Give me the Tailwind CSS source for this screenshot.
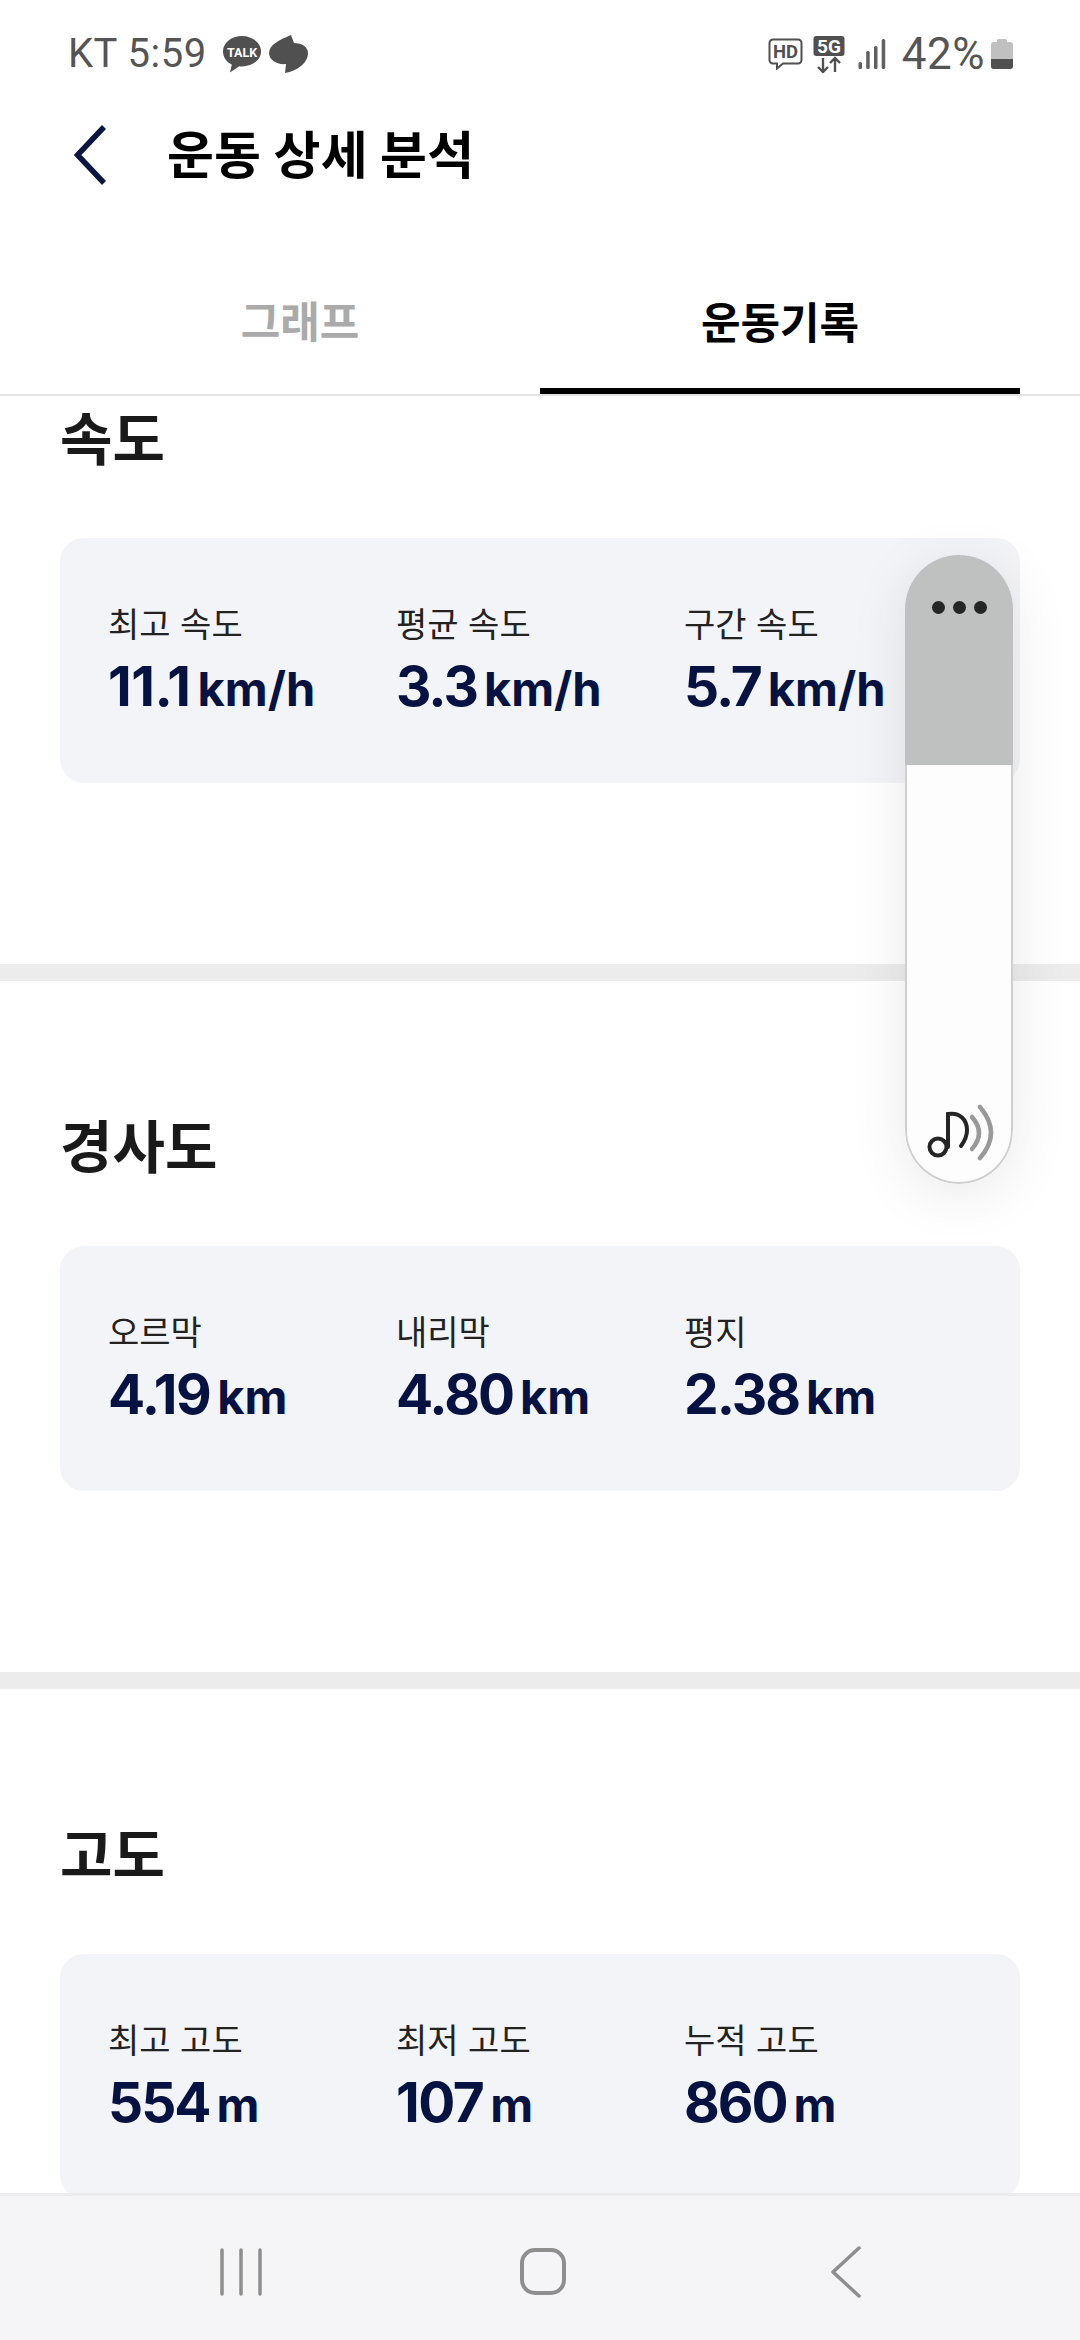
<!DOCTYPE html>
<html lang="ko">
<head>
<meta charset="utf-8">
<script src="https://cdn.jsdelivr.net/npm/@tailwindcss/browser@4"></script>
</head>
<body class="bg-white">
<div class="relative w-[1080px] h-[2340px] overflow-hidden flex flex-col bg-white font-['Inter','Noto_Sans_CJK_KR',sans-serif]">

    <!-- status bar -->
    <div class="h-[108px] shrink-0 flex items-center justify-between pl-[68px] pr-[67px] text-[#555] text-[40px] font-['Roboto','Noto_Sans_CJK_KR',sans-serif]">
        <div class="flex items-center">
            <span class="tracking-[0.5px]">KT 5:59</span>
            <svg class="ml-[16px]" width="38" height="37" viewBox="0 0 38 37">
                <path d="M19 0C8.500 0 0 6.800 0 15.500c0 5.600 3.500 10.400 8.800 13.100L7 36.500l9.200-6.300c.9.100 1.900.2 2.800.2 10.500 0 19-6.800 19-15S29.500 0 19 0z" fill="#505050"/>
                <text x="19" y="20.500" text-anchor="middle" font-size="12.500" font-weight="700" fill="#fff" font-family="Roboto">TALK</text>
            </svg>
            <svg class="ml-[8px]" width="39" height="38" viewBox="0 0 39 38">
                <path d="M22 0L25 8C33 8 39 12 39 18C39 28 28 36 16 38L17 29C8 30 0 25 0 18C0 10 10 5 22 0Z" fill="#505050"/>
            </svg>
        </div>
        <div class="flex items-center">
            <svg width="35" height="32" viewBox="0 0 35 32">
                <path d="M5 1.500h25a3.500 3.500 0 0 1 3.500 3.500v17a3.500 3.500 0 0 1-3.500 3.500H15l-6 5v-5H5A3.500 3.500 0 0 1 1.500 22V5A3.500 3.500 0 0 1 5 1.500z" fill="none" stroke="#505050" stroke-width="2"/>
                <text x="17.500" y="20" text-anchor="middle" font-size="18.500" font-weight="700" fill="#505050" font-family="Roboto">HD</text>
            </svg>
            <svg class="ml-[10px]" width="32" height="37" viewBox="0 0 32 37">
                <rect x="0.500" y="0" width="31" height="20" rx="3" fill="#505050"/>
                <text x="16" y="16.500" text-anchor="middle" font-size="19" font-weight="700" fill="#fff" font-family="Roboto">5G</text>
                <path d="M10 22v14M5 31l5 5 5-5M22 36V22M17 27l5-5 5 5" fill="none" stroke="#505050" stroke-width="2.400"/>
            </svg>
            <svg class="ml-[13px]" width="28" height="30" viewBox="0 0 28 30">
                <rect x="0.500" y="23" width="3.500" height="7" rx="1.500" fill="#606060"/>
                <rect x="8.200" y="12" width="3.500" height="18" rx="1.500" fill="#606060"/>
                <rect x="16" y="7" width="3.500" height="23" rx="1.500" fill="#606060"/>
                <rect x="23.700" y="0" width="3.500" height="30" rx="1.500" fill="#606060"/>
            </svg>
            <span class="ml-[16px] tracking-[0.5px] text-[44px]">42%</span>
            <svg class="ml-[6px]" width="22" height="32" viewBox="0 0 22 32">
                <path d="M6 4V2.500A1.500 1.500 0 0 1 7.500 1h7A1.500 1.500 0 0 1 16 2.500V4h3a3 3 0 0 1 3 3v21a3 3 0 0 1-3 3H3a3 3 0 0 1-3-3V7a3 3 0 0 1 3-3z" fill="#c0c0c0"/>
                <path d="M0 21h22v7a3 3 0 0 1-3 3H3a3 3 0 0 1-3-3z" fill="#505050"/>
            </svg>
        </div>
    </div>

    <!-- header -->
    <div class="h-[94px] shrink-0 flex items-center pl-[74px]">
        <svg width="32" height="60" viewBox="0 0 32 60">
            <path d="M30 2L3.500 30l26.500 28" fill="none" stroke="#0b1642" stroke-width="5.500"/>
        </svg>
        <h1 class="ml-[61px] text-[51px] font-bold text-black leading-none tracking-[0.2px]">운동 상세 분석</h1>
    </div>

    <!-- tabs -->
    <div class="h-[194px] shrink-0 flex items-stretch pl-[60px] pr-[60px] pt-[70px] border-b-2 border-[#e4e4e4] text-[43px] font-bold">
        <div class="w-[480px] flex items-center justify-center pb-[22px] text-[#aaaaaa]">그래프</div>
        <div class="w-[480px] flex items-center justify-center pb-[13px] text-black border-b-[6px] border-black">운동기록</div>
    </div>

    <!-- scroll content -->
    <div class="flex-1 overflow-hidden flex flex-col">
        <div class="pl-[60px] h-[568px] shrink-0">
            <h2 class="text-[57px] font-bold text-[#1a1a1a] leading-none pt-[15px]">속도</h2>
            <div class="mt-[70px] w-[960px] h-[245px] rounded-[24px] bg-[#f3f4f8] grid grid-cols-[288px_288px_1fr] pl-[48px] pt-[70px]">
                <div>
                    <p class="text-[34px] text-[#222] leading-none">최고 속도</p>
                    <p class="mt-[17px] text-[55px] font-bold text-[#061241] leading-none tracking-[-0.500px]">11.1<span class="ml-[7px] text-[47px] tracking-normal">km/h</span></p>
                </div>
                <div>
                    <p class="text-[34px] text-[#222] leading-none">평균 속도</p>
                    <p class="mt-[17px] text-[55px] font-bold text-[#061241] leading-none tracking-[-2px]">3.3<span class="ml-[7px] text-[47px] tracking-normal">km/h</span></p>
                </div>
                <div>
                    <p class="text-[34px] text-[#222] leading-none">구간 속도</p>
                    <p class="mt-[17px] text-[55px] font-bold text-[#061241] leading-none tracking-[-2px]">5.7<span class="ml-[7px] text-[47px] tracking-normal">km/h</span></p>
                </div>
            </div>
        </div>
        <div class="h-[17px] shrink-0 bg-[#ececec]"></div>

        <div class="pl-[60px] h-[691px] shrink-0">
            <h2 class="text-[57px] font-bold text-[#1a1a1a] leading-none pt-[138px]">경사도</h2>
            <div class="mt-[70px] w-[960px] h-[245px] rounded-[24px] bg-[#f3f4f8] grid grid-cols-[288px_288px_1fr] pl-[48px] pt-[70px]">
                <div>
                    <p class="text-[34px] text-[#222] leading-none">오르막</p>
                    <p class="mt-[17px] text-[55px] font-bold text-[#061241] leading-none tracking-[-1.500px]">4.19<span class="ml-[7px] text-[47px] tracking-normal">km</span></p>
                </div>
                <div>
                    <p class="text-[34px] text-[#222] leading-none">내리막</p>
                    <p class="mt-[17px] text-[55px] font-bold text-[#061241] leading-none tracking-[-2px]">4.80<span class="ml-[7px] text-[47px] tracking-normal">km</span></p>
                </div>
                <div>
                    <p class="text-[34px] text-[#222] leading-none">평지</p>
                    <p class="mt-[17px] text-[55px] font-bold text-[#061241] leading-none tracking-[-2px]">2.38<span class="ml-[7px] text-[47px] tracking-normal">km</span></p>
                </div>
            </div>
        </div>
        <div class="h-[17px] shrink-0 bg-[#ececec]"></div>

        <div class="pl-[60px] shrink-0">
            <h2 class="text-[57px] font-bold text-[#1a1a1a] leading-none pt-[138px]">고도</h2>
            <div class="mt-[70px] w-[960px] h-[245px] rounded-[24px] bg-[#f3f4f8] grid grid-cols-[288px_288px_1fr] pl-[48px] pt-[70px]">
                <div>
                    <p class="text-[34px] text-[#222] leading-none">최고 고도</p>
                    <p class="mt-[17px] text-[55px] font-bold text-[#061241] leading-none tracking-[-2px]">554<span class="ml-[7px] text-[47px] tracking-normal">m</span></p>
                </div>
                <div>
                    <p class="text-[34px] text-[#222] leading-none">최저 고도</p>
                    <p class="mt-[17px] text-[55px] font-bold text-[#061241] leading-none tracking-[-1.500px]">107<span class="ml-[7px] text-[47px] tracking-normal">m</span></p>
                </div>
                <div>
                    <p class="text-[34px] text-[#222] leading-none">누적 고도</p>
                    <p class="mt-[17px] text-[55px] font-bold text-[#061241] leading-none tracking-[-2px]">860<span class="ml-[7px] text-[47px] tracking-normal">m</span></p>
                </div>
            </div>
        </div>
    </div>

    <!-- bottom nav -->
    <div class="h-[147px] shrink-0 relative z-10 bg-[#f5f5f7] border-t-[3px] border-[#ebebed]">
        <svg class="absolute left-[220px] top-[52px]" width="44" height="50" viewBox="0 0 44 50">
            <path d="M2 2v44M21 2v44M40 2v44" fill="none" stroke="#8e8e8e" stroke-width="3.500" stroke-linecap="round"/>
        </svg>
        <svg class="absolute left-[518px] top-[51px]" width="50" height="52" viewBox="0 0 50 52">
            <rect x="4" y="3" width="42" height="43" rx="13" fill="none" stroke="#8e8e8e" stroke-width="4"/>
        </svg>
        <svg class="absolute left-[828px] top-[50px]" width="34" height="52" viewBox="0 0 34 52">
            <path d="M31 2L5 26l26 24" fill="none" stroke="#8e8e8e" stroke-width="3.500" stroke-linecap="round" stroke-linejoin="round"/>
        </svg>
    </div>

    <!-- floating edge panel -->
    <div class="absolute left-[905px] top-[555px] w-[108px] h-[629px] rounded-[54px] bg-[#fdfdfd] overflow-hidden shadow-[0_10px_60px_rgba(0,0,0,0.09)] flex flex-col">
        <div class="h-[210px] shrink-0 bg-[#bfc0c0] flex items-start justify-center gap-[8px] pt-[46px]">
            <span class="w-[13px] h-[13px] rounded-full bg-[#252525]"></span>
            <span class="w-[13px] h-[13px] rounded-full bg-[#252525]"></span>
            <span class="w-[13px] h-[13px] rounded-full bg-[#252525]"></span>
        </div>
        <div class="flex-1 flex items-end justify-center pl-[3px] pb-[20px] border-x-2 border-b-2 border-[#cfcfcf] rounded-b-[54px]">
            <svg width="70" height="62" viewBox="0 0 70 62">
                <circle cx="12" cy="47" r="8.500" fill="none" stroke="#252525" stroke-width="4"/>
                <path d="M22 47V14c12-2 19 6 19 16 0 6-3 12-6 16" fill="none" stroke="#252525" stroke-width="4" stroke-linecap="round"/>
                <path d="M46 17Q60 33 46 49" fill="none" stroke="#999" stroke-width="4.500" stroke-linecap="round"/>
                <path d="M54 7Q76 33 54 58" fill="none" stroke="#999" stroke-width="4.500" stroke-linecap="round"/>
            </svg>
        </div>
    </div>
</div>
</body>
</html>
